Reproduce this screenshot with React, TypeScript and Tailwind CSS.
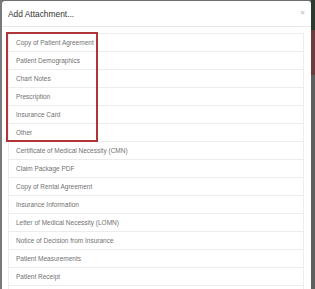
const items = [
	"Copy of Patient Agreement",
	"Patient Demographics",
	"Chart Notes",
	"Prescription",
	"Insurance Card",
	"Other",
	"Certificate of Medical Necessity (CMN)",
	"Claim Package PDF",
	"Copy of Rental Agreement",
	"Insurance Information",
	"Letter of Medical Necessity (LOMN)",
	"Notice of Decision from Insurance",
	"Patient Measurements",
	"Patient Receipt",
	"",
];

export default function App() {
	return (
		<div className="flex h-[289px] w-[315px] overflow-hidden bg-[#6e6e6e] font-['Liberation_Sans',Arial,sans-serif]">
			<div className="w-[2px] shrink-0 bg-[#7a7a7a]" />

			<div className="mt-[1px] flex w-[309px] shrink-0 flex-col rounded-t-[3px] bg-white">
				<div className="flex h-[26px] shrink-0 items-center justify-between border-b border-[#e8e8e8] pl-[6px] pr-[6px] pt-[2px]">
					<h4 className="text-[8.4px] text-[#333]">Add Attachment...</h4>
					<span className="-mt-[3px] text-[8px] font-bold leading-none text-[#c4c4c4]">×</span>
				</div>

				<div className="relative pl-[6px] pr-[7px] pt-[6px]">
					<ul>
						{items.map((item, i) => (
							<li
								key={i}
								className="-mb-px flex h-[19px] items-center border border-[#ececec] pl-[7px] text-[6.5px] text-[#727272]"
							>
								{item}
							</li>
						))}
					</ul>
					<div className="absolute left-[4px] top-[5px] h-[110px] w-[92px] border-2 border-[#b0353a]" />
				</div>
			</div>

			<div className="flex w-[4px] shrink-0 flex-col">
				<div className="h-[30px] bg-[#2c3b2c]" />
				<div className="h-[45px] bg-[#6d3c3d]" />
				<div className="flex-1 bg-[#5f5f5f]" />
			</div>
		</div>
	);
}
